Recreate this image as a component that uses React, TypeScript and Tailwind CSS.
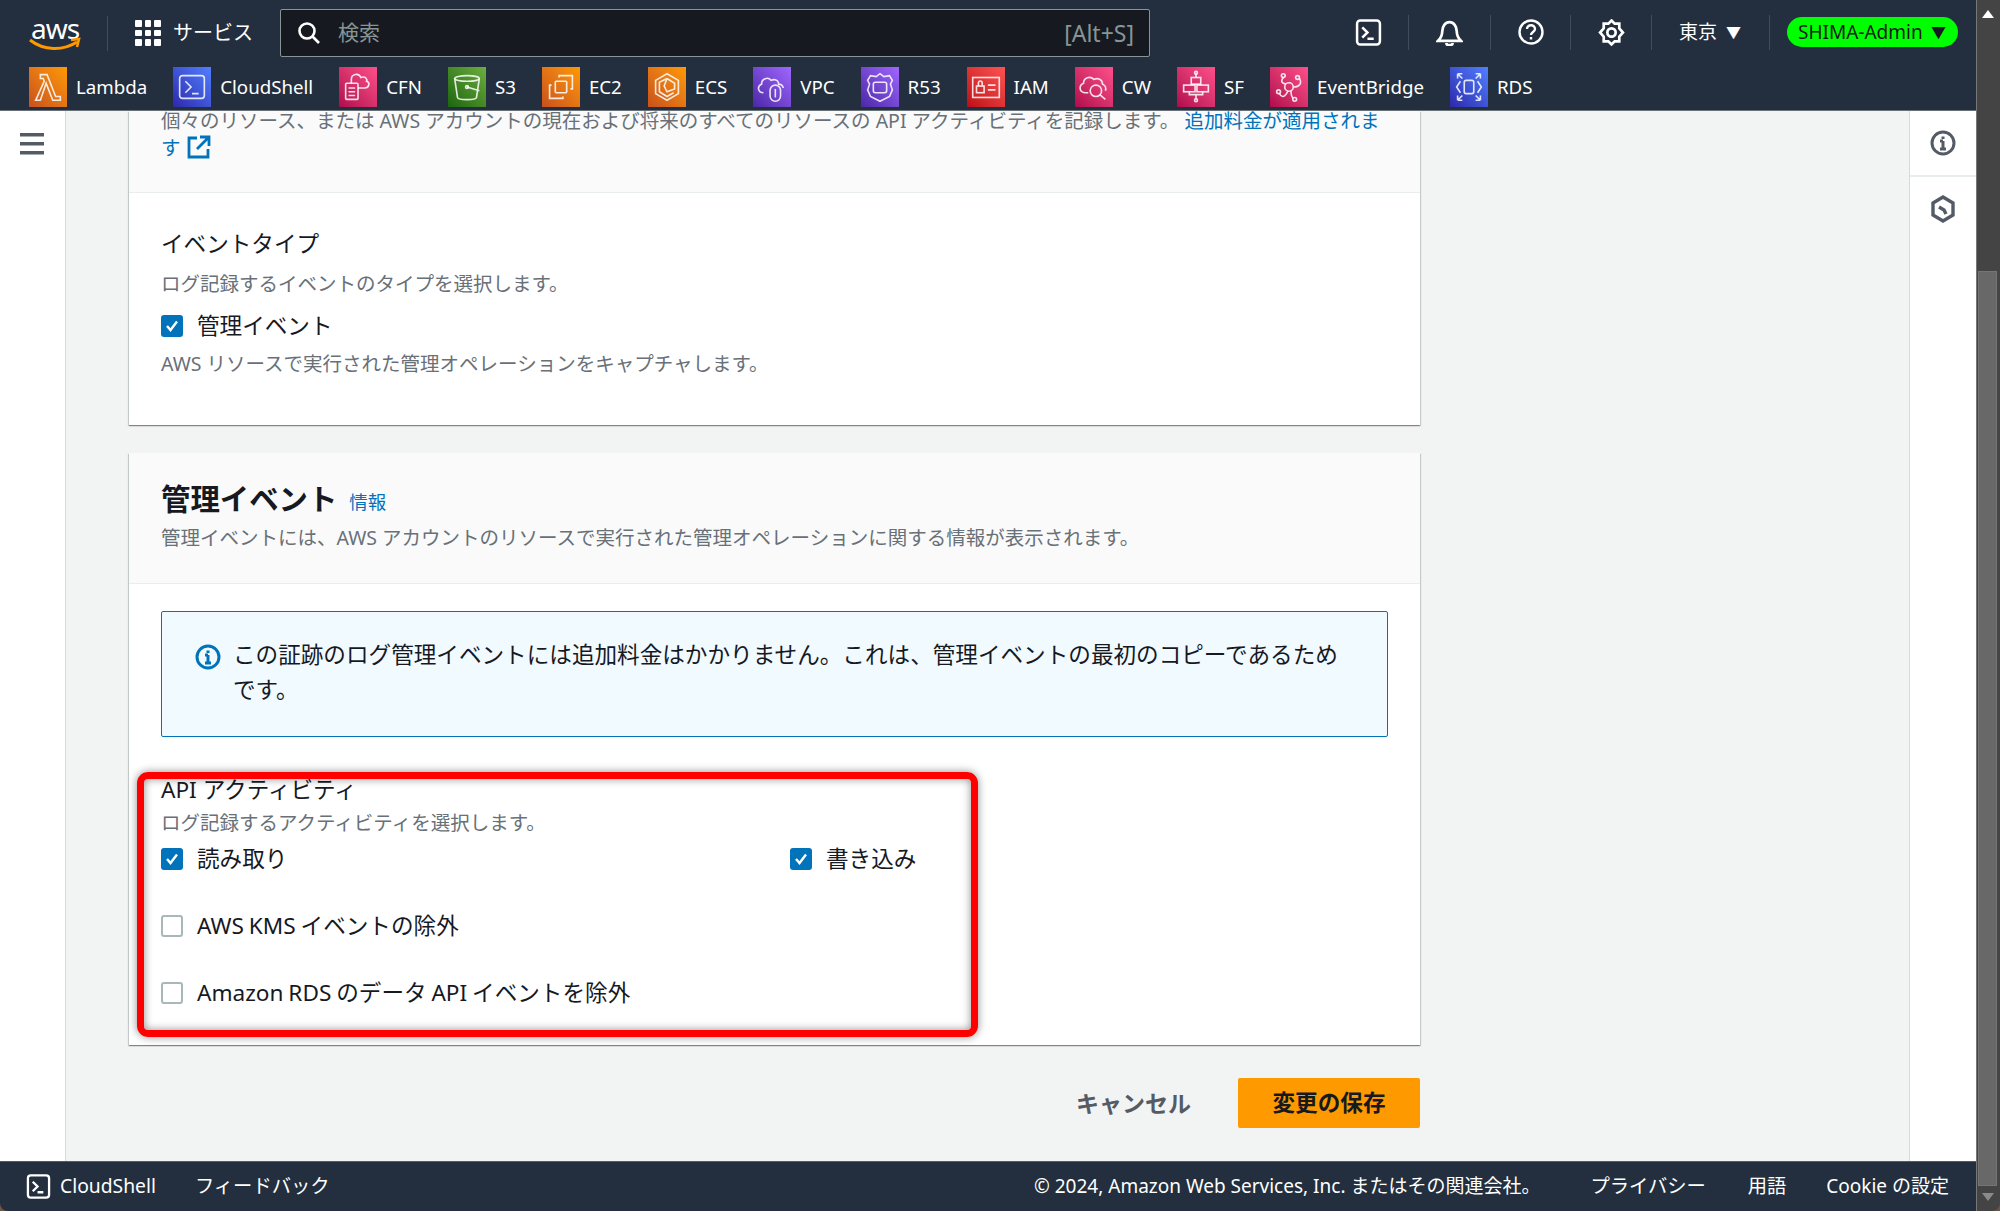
import React from "react";

const shortcuts = [
  { label: "Lambda", bg: "from-[#c8511b] to-[#ff9900]", icon: <path d="M12 7h7l9 23h5v4h-8l-7-18-6 18H7l9-20-1-3h-3z" /> },
  { label: "CloudShell", bg: "from-[#2e27ad] to-[#527fff]", icon: <><rect x="7" y="8" width="26" height="24" rx="3" /><path d="M13 14l6 6-6 6M20 27h7" /></> },
  { label: "CFN", bg: "from-[#b0084d] to-[#ff4f8b]", icon: <><rect x="7" y="16" width="13" height="17" rx="1" /><path d="M10 21h7M10 25h7M10 29h7M13 16v-4c0-6 8-7 10-2 5-2 7 2 6 4 4 1 3 7-2 7h-7" /></> },
  { label: "S3", bg: "from-[#1b660f] to-[#6cae3e]", icon: <><ellipse cx="20" cy="11" rx="13" ry="3" /><path d="M7 11l3 20c1 3 19 3 20 0l3-20M20 20l13 4" /><circle cx="20" cy="20" r="1.5" /></> },
  { label: "EC2", bg: "from-[#c8511b] to-[#ff9900]", icon: <><rect x="14" y="14" width="12" height="12" rx="1" /><path d="M18 10V8h14v14h-2M10 18H8v14h14v-2" /></> },
  { label: "ECS", bg: "from-[#c8511b] to-[#ff9900]", icon: <path d="M20 6l12 7v14l-12 7-12-7V13zM20 11l-8 4v10l8 5 7-4M20 11l8 5v6l-8 3-3-6 3-8" /> },
  { label: "VPC", bg: "from-[#4d27a8] to-[#a166ff]", icon: <><path d="M11 26c-6 0-7-7-2-9 0-6 7-8 10-4 4-2 8 0 8 4 2 0 4 1 5 4" /><rect x="18" y="18" width="11" height="17" rx="5.5" /><path d="M23.5 22v9" /></> },
  { label: "R53", bg: "from-[#4d27a8] to-[#a166ff]", icon: <><path d="M20 6l4 3 6-1 3 5-2 4 2 6-3 7-10 5-10-5-3-7 2-6-2-4 3-5 6 1z" /><rect x="13" y="15" width="14" height="11" rx="2" /></> },
  { label: "IAM", bg: "from-[#bd0816] to-[#ff5252]", icon: <><rect x="6" y="10" width="28" height="21" /><rect x="10" y="19" width="8" height="7" /><path d="M12 19v-3c0-3 4-3 4 0v3M22 18h8M22 23h8" /></> },
  { label: "CW", bg: "from-[#b0084d] to-[#ff4f8b]", icon: <><path d="M14 26H10c-6-1-6-8-1-10 0-6 7-8 11-4 4-2 9 0 9 5 3 1 4 4 3 7" /><circle cx="22" cy="24" r="6" /><path d="M26 28l6 5" /></> },
  { label: "SF", bg: "from-[#b0084d] to-[#ff4f8b]", icon: <><rect x="15" y="10" width="10" height="7" /><rect x="7" y="18" width="12" height="7" /><rect x="21" y="18" width="12" height="7" /><path d="M20 6v4M20 17v1M13 25v3h7v4M27 25v3h-7" /><circle cx="20" cy="5" r="1.5" /><circle cx="20" cy="34" r="1.5" /></> },
  { label: "EventBridge", bg: "from-[#b0084d] to-[#ff4f8b]", icon: <><circle cx="20" cy="20" r="4.5" /><circle cx="14" cy="8" r="2" /><circle cx="29" cy="10" r="2" /><circle cx="9" cy="25" r="2" /><circle cx="26" cy="33" r="2" /><path d="M14 10c-3 4-2 6 3 7M31 11c3 5 0 9-6 9M10 27c2 4 5 5 9-3M24 32c-2-3-2-5-2-8" /></> },
  { label: "RDS", bg: "from-[#2e27ad] to-[#527fff]", icon: <><rect x="15" y="13" width="10" height="14" rx="2" /><path d="M11 14l-4 6 4 6M29 14l4 6-4 6M8 6h5M8 6v5M8 6l5 5M32 6h-5M32 6v5M32 6l-5 5M8 34h5M8 34v-5M8 34l5-5M32 34h-5M32 34v-5M32 34l-5-5" /></> },
];

function Divider() {
  return <div className="h-[35px] w-px bg-[#414d5c]" />;
}

function TerminalIcon({ size }: { size: number }) {
  return (
    <svg width={size} height={size} viewBox="0 0 26 26" fill="none" stroke="currentColor" strokeWidth="2.4">
      <rect x="2" y="1.5" width="22" height="23" rx="3" />
      <path d="M7 8l5 5-5 5M12 19h6" />
    </svg>
  );
}

function Check({ checked }: { checked?: boolean }) {
  if (!checked) {
    return <span className="h-[22px] w-[22px] shrink-0 rounded-[3px] border-2 border-[#aab7b8] bg-white" />;
  }
  return (
    <span className="flex h-[22px] w-[22px] shrink-0 items-center justify-center rounded-[3px] bg-[#0073bb]">
      <svg width="16" height="16" viewBox="0 0 16 16" fill="none" stroke="white" strokeWidth="2.4">
        <path d="M3 8l3.5 4L13 3.5" />
      </svg>
    </span>
  );
}

function CheckRow({ label, checked }: { label: string; checked?: boolean }) {
  return (
    <div className="flex h-[30px] items-center gap-[14px] text-[22.6px] text-[#16191f] [word-spacing:-1px]">
      <Check checked={checked} />
      <span>{label}</span>
    </div>
  );
}

export default function App() {
  return (
    <div
      className="relative flex h-[1211px] w-[2000px] overflow-hidden bg-[#6b5548]"
      style={{ fontFamily: '"Noto Sans", "Noto Sans CJK JP", sans-serif' }}
    >
      <div className="flex h-full w-[1976px] flex-col overflow-hidden rounded-bl-[8px]">
        <header className="h-[111px] shrink-0 border-b border-[#687078] bg-[#232f3e] text-white">
          <div className="flex h-[66px] items-center">
            <div className="relative ml-[29px] h-[36px] w-[52px]">
              <span className="block text-center text-[28px] leading-[26px] tracking-[-1px]">aws</span>
              <svg className="absolute top-[22px] left-0" width="52" height="16" viewBox="0 0 52 16" fill="none">
                <path d="M1 3c14 11 33 11 47 2" stroke="#ff9900" strokeWidth="3" />
                <path d="M42 3l8-1-2 8" stroke="#ff9900" strokeWidth="2.6" />
              </svg>
            </div>
            <div className="ml-[26px] h-[35px] w-px bg-[#414d5c]" />
            <div className="ml-[27px] grid h-[26px] w-[26px] grid-cols-3 gap-[3px]">
              {Array.from({ length: 9 }).map((_, i) => (
                <span key={i} className="rounded-[1px] bg-white" />
              ))}
            </div>
            <span className="ml-[12px] text-[20px]">サービス</span>
            <div className="ml-[27px] flex h-[48px] w-[870px] items-center rounded-[2px] border border-[#879596] bg-[#16191f] pr-[15px] pl-[16px]">
              <svg width="24" height="24" viewBox="0 0 24 24" fill="none" stroke="white" strokeWidth="2.6">
                <circle cx="10" cy="10" r="7.5" />
                <path d="M15.5 15.5L22 22" />
              </svg>
              <span className="ml-[17px] text-[21px] text-[#879596]">検索</span>
              <span className="ml-auto text-[23px] text-[#879596]">[Alt+S]</span>
            </div>
            <div className="-mt-[2px] flex items-center">
              <div className="ml-[205px] flex w-[27px] justify-center">
                <TerminalIcon size={27} />
              </div>
              <div className="ml-[26px]"><Divider /></div>
              <svg className="ml-[27px]" width="27" height="27" viewBox="0 0 26 26" fill="none" stroke="white" strokeWidth="2.6">
                <path d="M2 21c3-3 4-5 4-9 0-5 3-9 7-9s7 4 7 9c0 4 1 6 4 9z" />
                <path d="M10 23c0 3 6 3 6 0" />
              </svg>
              <div className="ml-[27px]"><Divider /></div>
              <svg className="ml-[27px]" width="26" height="26" viewBox="0 0 26 26" fill="none" stroke="white" strokeWidth="2.4">
                <circle cx="13" cy="13" r="11.5" />
                <path d="M9 10c0-5 8-5 8 0 0 3-4 3-4 6" />
                <path d="M13 18v2.5" />
              </svg>
              <div className="ml-[26px]"><Divider /></div>
              <svg className="ml-[27px]" width="27" height="27" viewBox="0 0 26 26" fill="none" stroke="white" strokeWidth="2.6">
                <path d="M13 1.5l3 3h4.5v4.5l3.500 4-3.500 4v4.500H16l-3 3-3-3H5.500V17L2 13l3.500-4V4.500H10z" />
                <circle cx="13" cy="13" r="4" />
              </svg>
              <div className="ml-[26px]"><Divider /></div>
              <span className="ml-[27px] text-[19px]">東京</span>
              <span className="ml-[9px] text-[15px]">▼</span>
              <div className="ml-[28px]"><Divider /></div>
              <div className="ml-[17px] flex h-[30px] w-[171px] items-center justify-between rounded-[15px] bg-[#00ff00] pr-[12px] pl-[11px] text-[19px] text-[#16191f]">
                <span>SHIMA-Admin</span>
                <span className="text-[15px]">▼</span>
              </div>
            </div>
          </div>
          <nav className="mt-[1px] flex h-[40px] items-center gap-[26px] pl-[29px]">
            {shortcuts.map((s) => (
              <div key={s.label} className="flex items-center gap-[9px]">
                <span className={`h-[40px] w-[38px] bg-linear-to-tr ${s.bg}`}>
                  <svg width="38" height="40" viewBox="0 0 40 40" fill="none" stroke="white" strokeOpacity="0.85" strokeWidth="1.7">
                    {s.icon}
                  </svg>
                </span>
                <span className="text-[18.7px]">{s.label}</span>
              </div>
            ))}
          </nav>
        </header>

        <div className="flex min-h-0 flex-1">
          <aside className="w-[66px] shrink-0 border-r border-[#d5dbdb] bg-white pt-[22px] pl-[20px]">
            <svg width="24" height="22" viewBox="0 0 24 22" fill="#545b64">
              <rect y="0" width="24" height="3.500" />
              <rect y="9" width="24" height="3.500" />
              <rect y="18" width="24" height="3.500" />
            </svg>
          </aside>

          <main className="min-w-0 flex-1 bg-[#f2f3f3] pl-[63px]">
            <div className="w-[1291px]">
              <section className="bg-white shadow-[0_1px_1px_rgba(0,28,36,0.3),1px_1px_1px_rgba(0,28,36,0.15),-1px_1px_1px_rgba(0,28,36,0.15)]">
                <div className="h-[82px] border-b border-[#eaeded] bg-[#fafafa] pl-[32px] text-[19.5px] leading-[27px] text-[#687078]">
                  <p className="whitespace-nowrap leading-[19px]">
                    個々のリソース、または AWS アカウントの現在および将来のすべてのリソースの API アクティビティを記録します。{" "}
                    <span className="text-[#0073bb]">追加料金が適用されま</span>
                  </p>
                  <p className="mt-[4px] flex items-center gap-[6px] text-[#0073bb]">
                    す
                    <svg className="-mt-[1px]" width="24" height="24" viewBox="0 0 24 24" fill="none" stroke="#0073bb" strokeWidth="2.8">
                      <path d="M10 3H2v19h19v-8M13 2h9v9M22 2L10 14" />
                    </svg>
                  </p>
                </div>
                <div className="h-[232px] px-[32px] pt-[34px]">
                  <h3 className="text-[22.6px] leading-[34px] text-[#16191f]">イベントタイプ</h3>
                  <p className="mt-[10px] text-[19.5px] leading-[26px] text-[#687078]">ログ記録するイベントのタイプを選択します。</p>
                  <div className="mt-[14px]">
                    <CheckRow label="管理イベント" checked />
                  </div>
                  <p className="mt-[10px] text-[19.5px] leading-[26px] text-[#687078]">AWS リソースで実行された管理オペレーションをキャプチャします。</p>
                </div>
              </section>

              <section className="relative mt-[28px] bg-white shadow-[0_1px_1px_rgba(0,28,36,0.3),1px_1px_1px_rgba(0,28,36,0.15),-1px_1px_1px_rgba(0,28,36,0.15)]">
                <div className="h-[131px] border-b border-[#eaeded] bg-[#fafafa] px-[32px] pt-[22px]">
                  <h2 className="flex items-center gap-[12px] text-[29.4px] leading-[42px] font-semibold text-[#16191f]">
                    管理イベント
                    <span className="mt-[6px] text-[18.5px] font-normal text-[#0073bb]">情報</span>
                  </h2>
                  <p className="mt-[2px] text-[19.5px] leading-[26px] text-[#687078]">管理イベントには、AWS アカウントのリソースで実行された管理オペレーションに関する情報が表示されます。</p>
                </div>
                <div className="h-[461px] px-[32px] pt-[27px]">
                  <div className="flex h-[126px] items-start gap-[12px] rounded-[2px] border border-[#0073bb] bg-[#f1faff] pt-[25px] pl-[33px] text-[22.6px] leading-[35px] text-[#16191f]">
                    <svg className="mt-[7px] shrink-0" width="26" height="26" viewBox="0 0 26 26" fill="none" stroke="#0073bb" strokeWidth="3">
                      <circle cx="13" cy="13" r="11" />
                      <path d="M13 11v8M10 19h6M10 11h3M13 6.500v2.500" />
                    </svg>
                    <p className="w-[1120px]">この証跡のログ管理イベントには追加料金はかかりません。これは、管理イベントの最初のコピーであるため<br />です。</p>
                  </div>
                  <h3 className="mt-[37px] text-[22.6px] leading-[32px] text-[#16191f]">API アクティビティ</h3>
                  <p className="mt-[4px] text-[19.5px] leading-[26px] text-[#687078]">ログ記録するアクティビティを選択します。</p>
                  <div className="mt-[8px] grid grid-cols-[629px_1fr] gap-y-[37px]">
                    <CheckRow label="読み取り" checked />
                    <CheckRow label="書き込み" checked />
                    <div className="col-span-2">
                      <CheckRow label="AWS KMS イベントの除外" />
                    </div>
                    <div className="col-span-2">
                      <CheckRow label="Amazon RDS のデータ API イベントを除外" />
                    </div>
                  </div>
                </div>
              </section>

              <div className="mt-[33px] flex items-center justify-end gap-[47px]">
                <span className="text-[23px] font-bold text-[#545b64]">キャンセル</span>
                <span className="flex h-[50px] w-[182px] items-center justify-center rounded-[2px] bg-[#ff9900] text-[22.6px] font-bold text-[#16191f]">変更の保存</span>
              </div>
            </div>
          </main>

          <aside className="w-[67px] shrink-0 border-l border-[#d5dbdb] bg-white">
            <div className="flex h-[66px] items-center justify-center border-b-2 border-[#eaeded] pb-[1px]">
              <svg width="26" height="26" viewBox="0 0 26 26" fill="none" stroke="#545b64" strokeWidth="3">
                <circle cx="13" cy="13" r="11" />
                <path d="M13 11v8M10 19h6M10 11h3M13 6.500v2.500" />
              </svg>
            </div>
            <div className="flex h-[64px] items-center justify-center">
              <svg width="26" height="28" viewBox="0 0 26 28" fill="none" stroke="#545b64" strokeWidth="3.4">
                <path d="M13 2l10 6v12l-10 6-10-6V8z" />
                <path d="M9 12l5 3 2 4" />
              </svg>
            </div>
          </aside>
        </div>

        <footer className="flex h-[50px] shrink-0 items-center border-t border-[#545b64] bg-[#232f3e] pr-[27px] pl-[26px] text-[19.3px] text-white">
          <TerminalIcon size={25} />
          <span className="ml-[9px]">CloudShell</span>
          <span className="ml-[39px]">フィードバック</span>
          <span className="ml-auto text-[19px]">© 2024, Amazon Web Services, Inc. またはその関連会社。</span>
          <span className="ml-[50px]">プライバシー</span>
          <span className="ml-[42px]">用語</span>
          <span className="ml-[40px] text-[19px]">Cookie の設定</span>
        </footer>
      </div>

      <div className="relative h-full w-[24px] rounded-br-[8px] border-l border-[#777777] bg-[#444444]">
        <svg className="absolute top-[9px] left-[4px]" width="14" height="10" viewBox="0 0 14 10" fill="white">
          <path d="M7 1l6 8H1z" />
        </svg>
        <div className="absolute top-[271px] left-[1px] h-[915px] w-[19px] border border-[#757575] bg-[#686868]" />
        <svg className="absolute top-[1192px] left-[4px]" width="14" height="10" viewBox="0 0 14 10" fill="#8a8a8a">
          <path d="M1 1h12l-6 8z" />
        </svg>
      </div>

      {/* 注釈の赤枠 */}
      <div className="absolute top-[772px] left-[137px] h-[265px] w-[841px] rounded-[11px] border-[7px] border-[#ff0000] shadow-[0_0_8px_rgba(0,0,0,0.45),inset_0_0_8px_rgba(0,0,0,0.45)]" />
    </div>
  );
}
